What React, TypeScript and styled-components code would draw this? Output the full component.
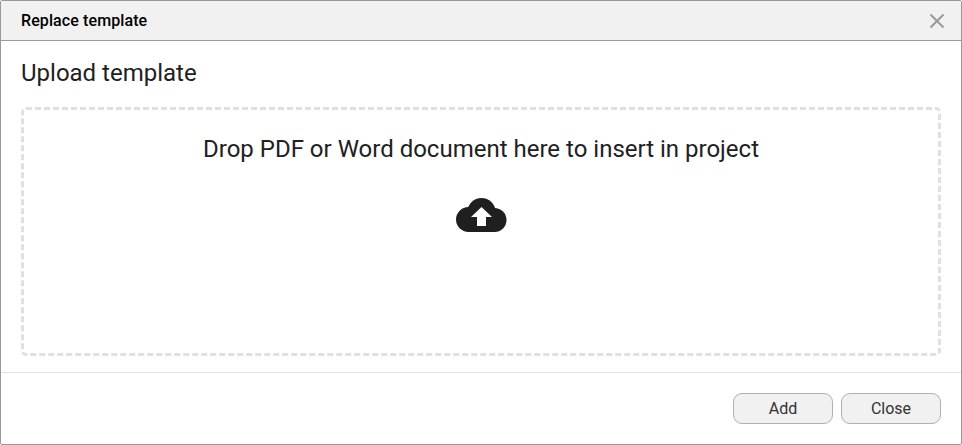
import React from 'react';
import styled, { createGlobalStyle } from 'styled-components';

const GlobalStyle = createGlobalStyle`
  html, body {
    margin: 0;
    padding: 0;
    height: 100%;
    background: #fff;
  }
  #root {
    height: 100%;
  }
`;

const CloudUpload = () => (
  <S.Cloud viewBox="0 0 51 35">
    <circle cx="25.5" cy="14" r="14" />
    <circle cx="12.5" cy="21.5" r="12.5" />
    <circle cx="38.5" cy="22" r="12" />
    <rect x="12" y="14" width="27" height="20" />
    <polygon points="25.5,9 36,19 30,19 30,28 21,28 21,19 15,19" fill="#fff" />
  </S.Cloud>
);

const App = () => {
  return (
    <>
      <GlobalStyle />
      <S.Dialog>
        <S.Header>
          <S.Title>Replace template</S.Title>
          <S.CloseIcon viewBox="0 0 16 16">
            <path d="M1.5 1.5 L14.5 14.5 M14.5 1.5 L1.5 14.5" />
          </S.CloseIcon>
        </S.Header>
        <S.Body>
          <S.Heading>Upload template</S.Heading>
          <S.DropZone>
            <S.DropText>Drop PDF or Word document here to insert in project</S.DropText>
            <CloudUpload />
          </S.DropZone>
        </S.Body>
        <S.Footer>
          <S.Button>Add</S.Button>
          <S.Button>Close</S.Button>
        </S.Footer>
      </S.Dialog>
    </>
  );
};

const S = {
  Dialog: styled.div`
    box-sizing: border-box;
    width: 962px;
    height: 445px;
    display: flex;
    flex-direction: column;
    background: #fff;
    border: 1px solid #999;
    border-radius: 2px;
    font-family: Roboto, "Liberation Sans", sans-serif;
    color: #212121;
  `,
  Header: styled.div`
    box-sizing: border-box;
    height: 40px;
    flex: none;
    display: flex;
    align-items: center;
    justify-content: space-between;
    padding: 0 16px 0 20px;
    background: #f1f1f1;
    border-bottom: 1px solid #999;
  `,
  Title: styled.div`
    font-size: 16px;
    font-weight: 500;
    letter-spacing: 0.1px;
    color: #000;
  `,
  CloseIcon: styled.svg`
    width: 16px;
    height: 16px;
    fill: none;
    stroke: #999;
    stroke-width: 2;
  `,
  Body: styled.div`
    box-sizing: border-box;
    height: 332px;
    flex: none;
    padding: 19px 20px 0;
    border-bottom: 1px solid #e0e0e0;
  `,
  Heading: styled.div`
    font-size: 24px;
    line-height: 26px;
    margin-bottom: 21px;
  `,
  DropZone: styled.div`
    box-sizing: border-box;
    height: 249px;
    display: flex;
    flex-direction: column;
    align-items: center;
    gap: 34px;
    padding-top: 24px;
    border: 3px dashed #e0e0e0;
    border-radius: 5px;
  `,
  DropText: styled.div`
    font-size: 24px;
    line-height: 30px;
  `,
  Cloud: styled.svg`
    width: 51px;
    height: 35px;
    fill: #1f1f1f;
  `,
  Footer: styled.div`
    flex: 1;
    display: flex;
    justify-content: flex-end;
    align-items: center;
    gap: 8px;
    padding: 0 20px;
  `,
  Button: styled.button`
    box-sizing: border-box;
    width: 100px;
    height: 31px;
    padding: 0;
    background: #f1f1f1;
    border: 1px solid #b0b0b0;
    border-radius: 9px;
    font-family: inherit;
    font-size: 16px;
    color: #333;
  `,
};

export default App;
